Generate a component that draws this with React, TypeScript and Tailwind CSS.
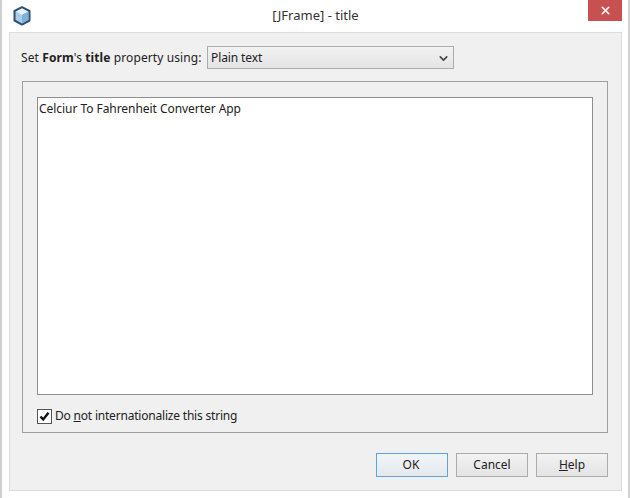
import React from 'react';
import { X, ChevronDown } from 'lucide-react';

const font = "font-['Noto_Sans','Open_Sans',sans-serif]";

function CubeIcon() {
  return (
    <svg width="18" height="20" viewBox="0 0 18 20">
      <path d="M9 1.2 L16.5 5 V14.5 L9 18.6 L1.5 14.5 V5 Z" fill="#a9cdea" stroke="#2f4f73" strokeWidth="2" strokeLinejoin="round" />
      <path d="M9 2.5 L15 5.6 L9 9 L3 5.6 Z" fill="#e8f2fa" />
      <path d="M9 9 V17.5 L15.3 13.8 V5.8 Z" fill="#7fb0da" />
    </svg>
  );
}

function DialogButton({ children, primary }: { children: React.ReactNode; primary?: boolean }) {
  return (
    <button
      className={
        primary
          ? 'w-[72px] h-[24px] border border-[#5ea3dc] bg-gradient-to-b from-[#f2f5f8] to-[#e4e9ee] text-[12px] text-[#222] pr-[2px]'
          : 'w-[72px] h-[24px] border border-[#acacac] bg-gradient-to-b from-[#f2f2f2] to-[#e4e4e4] text-[12px] text-[#222]'
      }
    >
      {children}
    </button>
  );
}

export default function App() {
  return (
    <div className={`w-[630px] h-[498px] bg-white overflow-hidden flex flex-col border-x-2 border-[#d0d0d0] ${font}`}>
      {/* Title bar */}
      <div className="h-[32px] shrink-0 flex items-start relative">
        <div className="ml-[11px] mt-[6px]">
          <CubeIcon />
        </div>
        <div className="flex-1 text-center text-[13px] text-[#333] pt-[6px] pl-[12px]">[JFrame] - title</div>
        <div className="w-[34px] h-[21px] mr-[6px] bg-[#c75050] flex items-center justify-center">
          <X className="w-[13px] h-[13px] text-white" strokeWidth={3} />
        </div>
      </div>

      {/* Content */}
      <div className="ml-[7px] mr-[6px] h-[459px] bg-[#f0f0f0] border border-[#dcdcdc] px-[12px] flex flex-col">
        <div className="h-[48px] shrink-0 flex items-center text-[12px] text-[#222]">
          <span className="w-[185px] -ml-px pt-[1px] whitespace-nowrap tracking-[0.1px]">
            Set <b>Form</b>'s <b>title</b> property using:
          </span>
          <div className="w-[247px] h-[23px] ml-px border border-[#acacac] bg-gradient-to-b from-[#f2f2f2] to-[#e4e4e4] flex items-center justify-between pl-[3px] pr-[3px]">
            <span className="pt-[1px] tracking-[-0.1px]">Plain text</span>
            <ChevronDown className="w-[13px] h-[13px] mt-[3px] text-[#444]" strokeWidth={3} />
          </div>
        </div>

        <div className="w-[586px] h-[352px] shrink-0 border border-[#a0a0a0] px-[14px] pt-[15px] flex flex-col">
          <div className="h-[298px] shrink-0 bg-white border border-[#8f8f8f] px-[1px] py-[2px] text-[12px] text-[#222] tracking-[-0.05px]">
            Celciur To Fahrenheit Converter App
          </div>
          <label className="flex items-center mt-[12px] text-[12px] text-[#222]">
            <span className="w-[15px] h-[15px] border border-[#555] bg-white flex items-center justify-center mr-[3px]">
              <svg width="11" height="11" viewBox="0 0 11 11">
                <path d="M1.5 5.5 L4.2 8.5 L9.5 1.8" fill="none" stroke="#111" strokeWidth="2.4" />
              </svg>
            </span>
            <span className="tracking-[-0.2px]">
              Do <span className="underline">n</span>ot internationalize this string
            </span>
          </label>
        </div>

        <div className="w-[586px] flex justify-end gap-[8px] mt-[20px]">
          <DialogButton primary>OK</DialogButton>
          <DialogButton>Cancel</DialogButton>
          <DialogButton>
            <span className="underline">H</span>elp
          </DialogButton>
        </div>
      </div>
    </div>
  );
}
